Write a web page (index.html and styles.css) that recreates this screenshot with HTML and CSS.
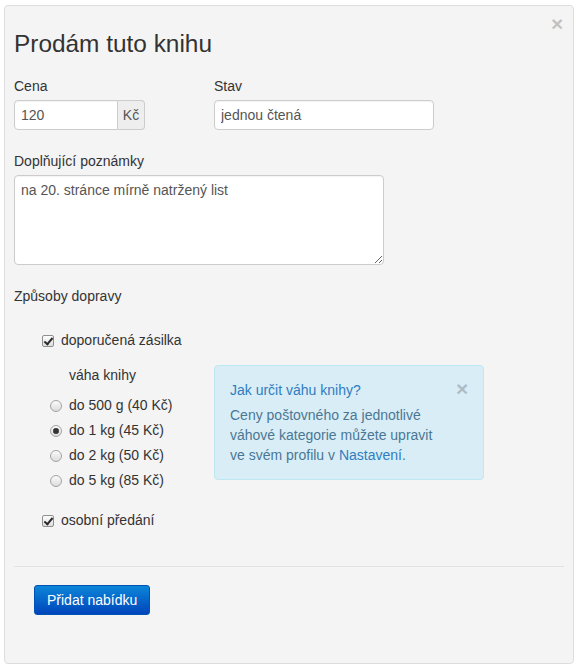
FILE: index.html
```html
<!DOCTYPE html>
<html lang="cs">
<head>
    <meta charset="UTF-8">
    <title>Prodám tuto knihu</title>
    <link rel="stylesheet" href="styles.css">
</head>
<body>

    <div class="modal">
        <button type="button" class="close" title="Zavřít">&times;</button>

        <h3 class="modal-title">Prodám tuto knihu</h3>

        <form class="offer-form">
            <!-- Cena + stav -->
            <div class="row">
                <div class="form-group col">
                    <label for="price">Cena</label>
                    <div class="input-group">
                        <input id="price" type="text" class="form-control price" value="120">
                        <span class="addon">Kč</span>
                    </div>
                </div>
                <div class="form-group col">
                    <label for="state">Stav</label>
                    <input id="state" type="text" class="form-control state" value="jednou čtená">
                </div>
            </div>

            <div class="form-group">
                <label for="notes">Doplňující poznámky</label>
                <textarea id="notes" class="form-control notes">na 20. stránce mírně natržený list</textarea>
            </div>

            <!-- Doprava -->
            <div class="shipping">
                <p class="shipping-title">Způsoby dopravy</p>

                <label class="check"><input type="checkbox" checked>doporučená zásilka</label>

                <div class="row weight-row">
                    <div class="col weights">
                        <p class="weights-title">váha knihy</p>
                        <label class="radio"><input type="radio" name="weight">do 500 g (40 Kč)</label>
                        <label class="radio"><input type="radio" name="weight" checked>do 1 kg (45 Kč)</label>
                        <label class="radio"><input type="radio" name="weight">do 2 kg (50 Kč)</label>
                        <label class="radio"><input type="radio" name="weight">do 5 kg (85 Kč)</label>
                    </div>

                    <div class="alert">
                        <button type="button" class="close" title="Zavřít">&times;</button>
                        <p class="alert-title">Jak určit váhu knihy?</p>
                        <p>Ceny poštovného za jednotlivé<br>váhové kategorie můžete upravit<br>ve svém profilu v <a href="#">Nastavení</a>.</p>
                    </div>
                </div>

                <label class="check personal"><input type="checkbox" checked>osobní předání</label>
            </div>

            <hr>

            <button type="button" class="btn-primary">Přidat nabídku</button>
        </form>
    </div>

</body>
</html>
```

FILE: styles.css
```css
* {
    margin: 0;
    padding: 0;
    box-sizing: border-box;
}

body {
    font-family: "Liberation Sans", Arial, sans-serif;
    font-size: 14px;
    line-height: 20px;
    color: #333;
    background-color: #fff;
}

.modal {
    position: relative;
    width: 570px;
    height: 659px;
    margin: 5px 4px;
    padding: 0 9px;
    background-color: #f4f4f4;
    border: 1px solid #ddd;
    border-radius: 4px;
}

/* Close button (x) */
.close {
    position: absolute;
    top: 7px;
    right: 10px;
    width: 12px;
    font-family: "Liberation Sans", Arial, sans-serif;
    font-size: 21px;
    font-weight: bold;
    line-height: 1;
    color: #000;
    opacity: 0.2;
    background: none;
    border: none;
    cursor: pointer;
}

.modal-title {
    margin-top: 25px;
    font-size: 24.4px;
    font-weight: normal;
    line-height: 26px;
}

.offer-form {
    margin-top: 19px;
}

.row {
    display: flex;
}

.col {
    width: 200px;
}

.form-group {
    margin-bottom: 21px;
}

.form-group label {
    display: block;
    margin-bottom: 4px;
}

.form-control {
    display: block;
    height: 30px;
    padding: 0 6px;
    font: inherit;
    color: #555;
    background-color: #fff;
    border: 1px solid #ccc;
    border-radius: 4px;
    box-shadow: inset 0 1px 1px rgba(0, 0, 0, 0.05);
}

.input-group {
    display: flex;
}

.price {
    width: 104px;
    border-radius: 4px 0 0 4px;
}

.addon {
    width: 27px;
    height: 30px;
    line-height: 28px;
    text-align: center;
    color: #555;
    background-color: #eee;
    border: 1px solid #ccc;
    border-left: none;
    border-radius: 0 4px 4px 0;
}

.state {
    width: 220px;
}

.notes {
    width: 370px;
    height: 90px;
    padding: 4px 6px;
    line-height: 20px;
    resize: vertical;
}

/* Shipping options */
.shipping-title {
    margin-bottom: 24px;
}

.check,
.radio {
    display: flex;
    align-items: center;
    height: 20px;
}

.check {
    padding-left: 28px;
    margin-bottom: 15px;
}

.check.personal {
    margin-top: 20px;
    margin-bottom: 0;
}

.check input {
    -webkit-appearance: none;
    appearance: none;
    position: relative;
    flex: none;
    width: 12px;
    height: 12px;
    margin: 1px 7px 0 0;
    border: 1px solid #8f8f8f;
    border-radius: 2px;
    background: linear-gradient(#fdfdfd, #dedede);
}

.check input:checked::after {
    content: '';
    position: absolute;
    left: 3px;
    top: 0;
    width: 3px;
    height: 7px;
    border: solid #2b2b2b;
    border-width: 0 2px 2px 0;
    transform: rotate(40deg);
}

.weights-title {
    padding-left: 55px;
    margin-bottom: 10px;
}

.radio {
    padding-left: 36px;
    margin-bottom: 5px;
}

.radio:last-child {
    margin-bottom: 0;
}

.radio input {
    -webkit-appearance: none;
    appearance: none;
    flex: none;
    width: 12px;
    height: 12px;
    margin: 1px 7px 0 0;
    border: 1px solid #a3a3a3;
    border-radius: 50%;
    background: linear-gradient(#fafafa, #dcdcdc);
}

.radio input:checked {
    background: radial-gradient(circle, #333 0, #333 2px, #666 3px, transparent 3.5px),
        linear-gradient(#fafafa, #dcdcdc);
}

/* Info box */
.alert {
    position: relative;
    width: 270px;
    height: 115px;
    padding: 14px 35px 14px 15px;
    color: #4a7894;
    background-color: #d9edf7;
    border: 1px solid #bce8f1;
    border-radius: 4px;
}

.alert .close {
    top: 12px;
    right: 15px;
}

.alert-title {
    margin-bottom: 5px;
    color: #2f7dbf;
}

.alert a {
    color: #2f7dbf;
    text-decoration: none;
}

hr {
    margin: 36px 0 18px;
    border: none;
    border-top: 1px solid #e2e2e2;
}

.btn-primary {
    height: 30px;
    margin-left: 20px;
    padding: 0 12px;
    font: inherit;
    color: #fff;
    background: linear-gradient(#0b86d8, #0045bb);
    border: 1px solid #0052b4;
    border-radius: 3px;
    cursor: pointer;
}
```
